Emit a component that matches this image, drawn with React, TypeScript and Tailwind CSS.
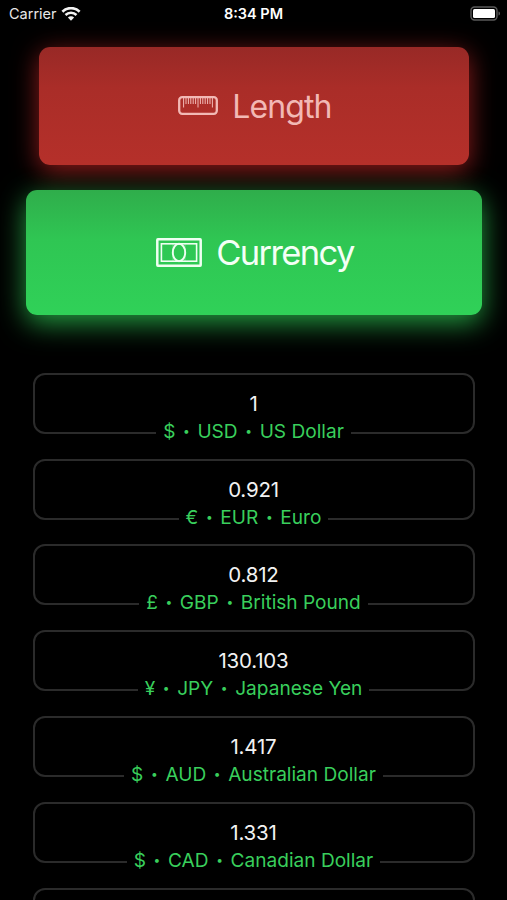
import type { ReactNode } from 'react';

type Rate = {
	symbol: string;
	code: string;
	name: string;
	value: string;
};

const rates: Rate[] = [
	{ symbol: '$', code: 'USD', name: 'US Dollar', value: '1' },
	{ symbol: '€', code: 'EUR', name: 'Euro', value: '0.921' },
	{ symbol: '£', code: 'GBP', name: 'British Pound', value: '0.812' },
	{ symbol: '¥', code: 'JPY', name: 'Japanese Yen', value: '130.103' },
	{ symbol: '$', code: 'AUD', name: 'Australian Dollar', value: '1.417' },
	{ symbol: '$', code: 'CAD', name: 'Canadian Dollar', value: '1.331' },
	{ symbol: '', code: '', name: '', value: '' },
];

const WifiIcon = () => (
	<svg width="20" height="14" viewBox="0 0 20 14" fill="none" stroke="#f2f2f2">
		<path d="M1.4 4.7a12.2 12.2 0 0 1 17.2 0" strokeWidth="2.7" />
		<path d="M4.5 8a7.8 7.8 0 0 1 11 0" strokeWidth="2.5" />
		<path d="M10 13.8 6.9 10.6a4.4 4.4 0 0 1 6.2 0Z" fill="#f2f2f2" stroke="none" />
	</svg>
);

const BatteryIcon = () => (
	<svg width="31" height="16" viewBox="0 0 31 16" fill="none">
		<rect x="1" y="1" width="26" height="13" rx="3.5" stroke="#5a5a5a" strokeWidth="1.4" />
		<rect x="3" y="3" width="22" height="9" rx="1.5" fill="#fff" />
		<path d="M28.5 5.5c2 .6 2 3.4 0 4Z" fill="#5a5a5a" />
	</svg>
);

const RulerIcon = () => {
	const ticks = Array.from({ length: 13 }, (_, i) => i);

	return (
		<svg width="40" height="19" viewBox="0 0 40 19" fill="none" stroke="#f2b9b5">
			<rect x="1.2" y="1.2" width="37.6" height="16.6" rx="3" strokeWidth="2.3" />
			{ticks.map((i) => (
				<path
					key={i}
					d={`M${5.6 + i * 2.4} 2v${i % 6 === 0 ? 9.5 : 6}`}
					strokeWidth="1"
				/>
			))}
		</svg>
	);
};

const BanknoteIcon = () => (
	<svg width="46" height="29" viewBox="0 0 46 29" fill="none" stroke="#effff2">
		<rect x="1.3" y="1.3" width="43.4" height="26.4" rx="0.6" strokeWidth="2.5" />
		<rect x="5.4" y="5.8" width="35.2" height="17.4" strokeWidth="1.6" />
		<path d="M17 6v17M29 6v17" strokeWidth="0.6" opacity="0.5" />
		<ellipse cx="23" cy="14.5" rx="6.2" ry="8.7" strokeWidth="1.9" />
	</svg>
);

const StatusBar = () => (
	<header className="grid h-7 grid-cols-3 items-center text-[14.5px] leading-none text-[#e8e8e8]">
		<div className="flex items-center gap-1 pl-[9px]">
			<span>Carrier</span>
			<WifiIcon />
		</div>
		<span className="text-center text-[14.5px] font-semibold text-white">8:34 PM</span>
		<div className="flex justify-end pr-1.5">
			<BatteryIcon />
		</div>
	</header>
);

type CardProps = {
	className: string;
	children: ReactNode;
};

const CategoryCard = ({ className, children }: CardProps) => (
	<button className={`flex items-center justify-center rounded-[11px] ${className}`}>
		{children}
	</button>
);

const Dot = () => (
	<span className="mx-[5.5px] inline-block w-[11px] text-center align-[3px] text-[12px] leading-none">
		•
	</span>
);

const RateField = ({ symbol, code, name, value }: Rate) => (
	<div className="relative h-[61px] shrink-0 rounded-[12px] border-2 border-[#2b2b2b]">
		<div className="pt-[15px] text-center text-[20.5px] leading-[28px] tracking-[-0.2px] text-[#f2f2f2]">
			{value}
		</div>
		{code && (
			<div className="absolute inset-x-0 top-[43px] flex justify-center">
				<span className="whitespace-nowrap bg-black px-[7px] text-[19.1px] leading-[27px] text-[#39cf5c]">
					{symbol}
					<Dot />
					{code}
					<Dot />
					{name}
				</span>
			</div>
		)}
	</div>
);

const App = () => (
	<div className="h-[900px] w-[507px] overflow-hidden bg-black font-['Inter',sans-serif]">
		<StatusBar />

		<div className="flex flex-col items-center pt-[18.5px]">
			<CategoryCard className="h-[118.5px] w-[430px] gap-3.5 bg-linear-to-b from-[#982926] via-[#aa2d28] via-35% to-[#b5302a] pl-[3px] text-[32px] tracking-[-0.9px] text-[#f2b9b5] shadow-[0_6px_26px_rgba(180,35,35,0.8)]">
				<RulerIcon />
				<span className="pt-0.5">Length</span>
			</CategoryCard>
			<CategoryCard className="mt-[24.5px] h-[125.5px] w-[456px] gap-3.5 bg-linear-to-b from-[#2fad4b] via-[#2fc653] via-40% to-[#30d158] pl-[3px] text-[34.5px] tracking-[-1.6px] text-[#f4fff6] shadow-[0_8px_28px_rgba(48,209,88,0.75)]">
				<BanknoteIcon />
				<span className="pt-0.5">Currency</span>
			</CategoryCard>
		</div>

		<main className="mx-auto mt-[57.7px] flex w-[442px] flex-col gap-[24.9px]">
			{rates.map((rate, i) => (
				<RateField key={i} {...rate} />
			))}
		</main>
	</div>
);

export default App;
